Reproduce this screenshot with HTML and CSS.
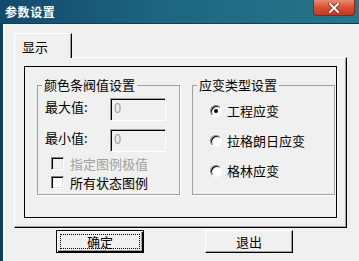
FILE: index.html
```html
<!DOCTYPE html>
<html lang="zh">
<head>
    <meta charset="UTF-8">
    <title>参数设置</title>
    <link rel="stylesheet" href="styles.css">
</head>
<body>
    <div class="window">
        <div class="titlebar">
            <span class="title">参数设置</span>
            <div class="close">
                <svg width="12" height="10" viewBox="0 0 12 10">
                    <path d="M2 1 L10 9 M10 1 L2 9" stroke="#7a2a20" stroke-width="3.4" stroke-linecap="square"/>
                    <path d="M2 1 L10 9 M10 1 L2 9" stroke="#fff" stroke-width="2" stroke-linecap="square"/>
                </svg>
            </div>
        </div>

        <div class="client">
            <div class="tabs">
                <div class="tab">显示</div>
            </div>
            <div class="panel">
                <div class="frame">
                    <fieldset class="group">
                        <legend>颜色条阀值设置</legend>
                        <div class="group-body">
                            <div class="field-row">
                                <span class="label">最大值:</span>
                                <div class="textbox">0</div>
                            </div>
                            <div class="field-row">
                                <span class="label">最小值:</span>
                                <div class="textbox">0</div>
                            </div>
                            <div class="check-row disabled">
                                <span class="checkbox"></span>
                                <span>指定图例极值</span>
                            </div>
                            <div class="check-row">
                                <span class="checkbox white"></span>
                                <span>所有状态图例</span>
                            </div>
                        </div>
                    </fieldset>

                    <fieldset class="group">
                        <legend>应变类型设置</legend>
                        <div class="group-body radios">
                            <div class="radio-row">
                                <span class="radio checked"></span>
                                <span>工程应变</span>
                            </div>
                            <div class="radio-row">
                                <span class="radio"></span>
                                <span>拉格朗日应变</span>
                            </div>
                            <div class="radio-row">
                                <span class="radio"></span>
                                <span>格林应变</span>
                            </div>
                        </div>
                    </fieldset>
                </div>
            </div>

            <div class="buttons">
                <button class="btn default"><span class="focus">确定</span></button>
                <button class="btn">退出</button>
            </div>
        </div>
    </div>
</body>
</html>
```

FILE: styles.css
```css
* {
    box-sizing: border-box;
}
body {
    margin: 0;
    background-color: #f0f0f0;
    font-family: "Noto Sans CJK SC", "Liberation Sans", sans-serif;
    font-size: 13px;
    color: #000;
}
.window {
    width: 359px;
    height: 261px;
    overflow: hidden;
    background-color: #f0f0f0;
}

/* title bar */
.titlebar {
    height: 24px;
    display: flex;
    align-items: flex-start;
    background: linear-gradient(to right, #124a6c, #1d6580 45%, #27768a);
    border-bottom: 1px solid #0c3f5c;
}
.title {
    color: #fff;
    font-weight: bold;
    font-size: 12px;
    letter-spacing: 0.6px;
    line-height: 14px;
    padding: 5px 0 0 5px;
}
.close {
    margin-left: auto;
    margin-right: 4px;
    width: 42px;
    height: 16px;
    border: 1px solid #7d2a1f;
    border-top: none;
    border-radius: 0 0 4px 4px;
    background: linear-gradient(to bottom, #e98a72, #d9512f 50%, #c7361e);
    display: flex;
    align-items: center;
    justify-content: center;
}

/* client area */
.client {
    height: 237px;
    border-left: 3px solid #0d3e5e;
    box-shadow: inset 2px 0 0 #fbfbfb;
    padding: 9px 0 0 11px;
}
.tabs {
    display: flex;
}
.tab {
    position: relative;
    z-index: 1;
    width: 58px;
    height: 25px;
    margin-bottom: -1px;
    background-color: #f0f0f0;
    border-top: 1px solid #fff;
    border-left: 1px solid #fff;
    border-right: 1px solid #000;
    box-shadow: inset -1px 0 0 #a0a0a0;
    padding: 6px 0 0 7px;
    line-height: 14px;
}
.panel {
    width: 333px;
    height: 171px;
    border-top: 1px solid #fff;
    border-left: 1px solid #fff;
    border-right: 1px solid #000;
    border-bottom: 1px solid #000;
    box-shadow: inset -1px -1px 0 #a0a0a0;
    padding: 8px 0 0 9px;
}
.frame {
    width: 313px;
    height: 152px;
    border: 1px solid #000;
    box-shadow: 1px 1px 0 #fff;
    display: grid;
    grid-template-columns: 143px 143px;
    column-gap: 12px;
    align-items: start;
    padding: 11px 0 0 12px;
}

/* group boxes */
.group {
    margin: 0;
    padding: 0;
    height: 117px;
    border: 1px solid #a0a0a0;
    box-shadow: 1px 1px 0 #fff;
    min-width: 0;
}
.group legend {
    margin-left: 4px;
    padding: 0 2px;
    line-height: 14px;
}
.group-body {
    padding: 6px 0 0 7px;
}
.field-row {
    display: flex;
    height: 23px;
    margin-bottom: 8px;
}
.label {
    width: 65px;
    line-height: 14px;
    padding-top: 2px;
}
.textbox {
    width: 56px;
    height: 23px;
    border: 1px solid;
    border-color: #a0a0a0 #fff #fff #a0a0a0;
    box-shadow: inset 1px 1px 0 #000;
    color: #a0a0a0;
    line-height: 14px;
    padding: 2px 0 0 3px;
}
.field-row + .check-row {
    margin-top: -6px;
}
.check-row {
    display: flex;
    align-items: center;
    height: 19px;
    line-height: 14px;
}
.check-row.disabled {
    color: #a0a0a0;
}
.checkbox {
    width: 13px;
    height: 13px;
    margin: 0 6px 0 6px;
    border: 1px solid;
    border-color: #808080 #fff #fff #808080;
    box-shadow: inset 1px 1px 0 #000, inset -1px -1px 0 #e3e3e3;
    background-color: #f0f0f0;
}
.checkbox.white {
    background-color: #fff;
}

/* radio buttons */
.radios {
    padding: 4px 0 0 17px;
}
.radio-row {
    display: flex;
    align-items: center;
    height: 30px;
    line-height: 14px;
}
.radio {
    width: 12px;
    height: 12px;
    margin-right: 5px;
    border-radius: 50%;
    border: 1px solid;
    border-color: #808080 #fff #fff #808080;
    box-shadow: inset 1px 1px 0 #000;
    background-color: #fff;
    display: flex;
    align-items: center;
    justify-content: center;
}
.radio.checked::after {
    content: "";
    width: 4px;
    height: 4px;
    border-radius: 50%;
    background-color: #000;
}

/* dialog buttons */
.buttons {
    display: flex;
    gap: 61px;
    margin: 2px 0 0 42px;
}
.btn {
    width: 88px;
    height: 23px;
    padding: 0;
    font: inherit;
    line-height: 14px;
    color: #000;
    background-color: #f0f0f0;
    border: 1px solid;
    border-color: #fff #000 #000 #fff;
    box-shadow: inset -1px -1px 0 #a0a0a0;
    border-radius: 0;
}
.btn.default {
    border: 1px solid #000;
    box-shadow: inset 1px 1px 0 #fff, inset -1px -1px 0 #000, inset -2px -2px 0 #a0a0a0;
    padding: 3px;
}
.focus {
    display: flex;
    align-items: center;
    justify-content: center;
    height: 100%;
    border: 1px dotted #000;
}
```
